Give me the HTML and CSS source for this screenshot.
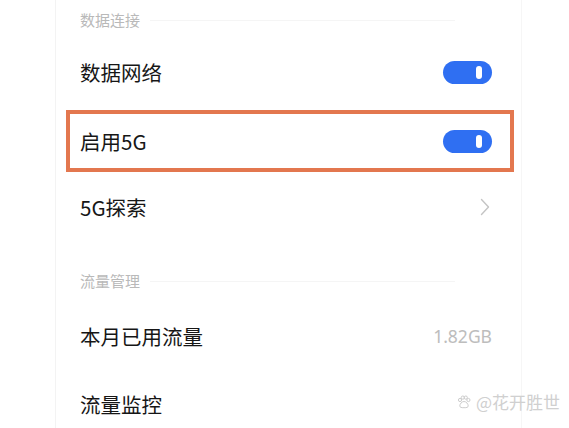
FILE: index.html
```html
<!DOCTYPE html>
<html>
<head>
    <meta charset="UTF-8">
    <meta name="viewport" content="width=device-width, initial-scale=1.0">
    <title>数据连接</title>
    <link rel="stylesheet" href="styles.css">
</head>
<body>
    <div class="settings-card">
        <div class="section-title first">
            <span>数据连接</span>
            <div class="title-line"></div>
        </div>
        <div class="setting-row row-first">
            <span class="label">数据网络</span>
            <div class="switch"><div class="knob"></div></div>
        </div>
        <div class="setting-row highlighted">
            <span class="label">启用5G</span>
            <div class="switch"><div class="knob"></div></div>
        </div>
        <div class="setting-row row-link">
            <span class="label">5G探索</span>
            <svg class="chevron" width="10" height="18" viewBox="0 0 10 18">
                <polyline points="1.5,1.5 8.5,9 1.5,16.5" fill="none" stroke="#c4c4c4" stroke-width="1.4" stroke-linecap="round" stroke-linejoin="round"/>
            </svg>
        </div>

        <div class="section-title second">
            <span>流量管理</span>
            <div class="title-line"></div>
        </div>
        <div class="setting-row">
            <span class="label">本月已用流量</span>
            <span class="value">1.82GB</span>
        </div>
        <div class="setting-row">
            <span class="label">流量监控</span>
        </div>
    </div>

    <!-- watermark -->
    <div class="watermark">
        <svg width="14" height="14" viewBox="0 0 14 14">
            <g fill="none" stroke="#cdcdcd" stroke-width="1">
                <circle cx="3" cy="5" r="1.6"/>
                <circle cx="5.8" cy="2.6" r="1.6"/>
                <circle cx="8.8" cy="2.6" r="1.6"/>
                <circle cx="11.4" cy="5" r="1.6"/>
                <path d="M7 6.5c-2.4 0-4.2 2.6-4.2 4.4 0 1.6 1.6 1.8 4.2 1.8s4.2-.2 4.2-1.8C11.2 9.1 9.4 6.5 7 6.5z"/>
            </g>
        </svg>
        <span>@花开胜世</span>
    </div>
</body>
</html>
```

FILE: styles.css
```css
* { box-sizing: border-box; margin: 0; padding: 0; }
body {
    font-family: "Noto Sans CJK SC", "Noto Sans", sans-serif;
    background-color: #ffffff;
    width: 569px;
    height: 428px;
    overflow: hidden;
    position: relative;
}
.settings-card {
    margin-left: 55px;
    width: 467px;
    height: 428px;
    border-left: 1px solid #f3f3f3;
    border-right: 1px solid #f6f6f6;
}

/* Section headers */
.section-title {
    display: flex;
    align-items: flex-end;
    padding-left: 24px;
    padding-right: 66px;
    font-size: 15px;
    line-height: 20px;
    color: #b9b9b9;
}
.section-title.first { height: 38px; padding-bottom: 8px; }
.section-title.second { height: 60px; padding-bottom: 11px; }
.title-line {
    flex: 1;
    height: 1px;
    margin-left: 10px;
    margin-bottom: 9px;
    background-color: #f5f5f5;
}

/* Rows */
.setting-row {
    display: flex;
    align-items: center;
    justify-content: space-between;
    height: 68px;
    padding-left: 24px;
    padding-right: 29px;
}
.row-first { margin-bottom: 4px; }
.row-link { height: 70px; }
.setting-row.highlighted {
    height: 62px;
    margin-left: 10px;
    margin-right: 7px;
    padding-left: 10px;
    padding-right: 18px;
    border: 4px solid #e3774f;
}
.label {
    font-size: 20.5px;
    color: #161616;
}
.value {
    font-family: "Noto Sans", sans-serif;
    font-size: 17.5px;
    color: #bdbdbd;
}

/* Switch */
.switch {
    width: 49px;
    height: 23px;
    border-radius: 12px;
    background-color: #2f6ff2;
    display: flex;
    align-items: center;
    justify-content: flex-end;
    padding-right: 10px;
}
.knob {
    width: 6px;
    height: 13px;
    border-radius: 3px;
    background-color: #ffffff;
}
.chevron { margin-right: 2px; }

/* Watermark */
.watermark {
    position: absolute;
    right: 9px;
    bottom: 14px;
    display: flex;
    align-items: center;
    gap: 5px;
    font-size: 17px;
    color: #d0d0d0;
}
```
